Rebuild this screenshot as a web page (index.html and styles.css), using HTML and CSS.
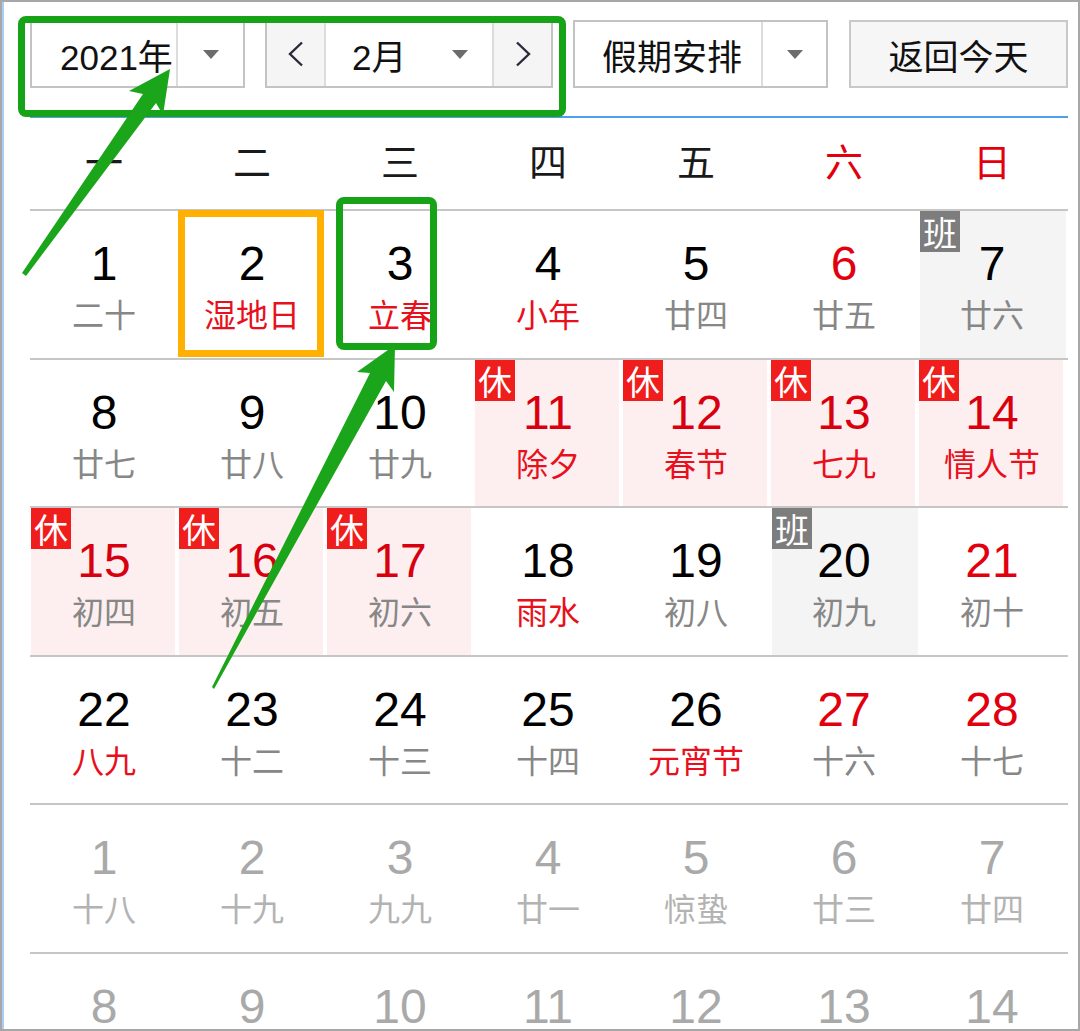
FILE: index.html
```html
<!DOCTYPE html>
<html lang="zh-CN">
<head>
<meta charset="utf-8">
<title>万年历</title>
<link rel="stylesheet" href="styles.css">
</head>
<body>
<div class="frame">
  <div class="toolbar">
    <div class="select year">
      <span class="seg seg-text">2021年</span>
      <span class="seg seg-arrow"><i class="tri"></i></span>
    </div>
    <div class="select month">
      <span class="seg seg-nav prev"><svg width="18" height="26" viewBox="0 0 18 26"><polyline points="15,1.5 3,13 15,24.5" fill="none" stroke="#2a2a3a" stroke-width="2.4"/></svg></span>
      <span class="seg seg-month">2月<i class="tri"></i></span>
      <span class="seg seg-nav next"><svg width="18" height="26" viewBox="0 0 18 26"><polyline points="3,1.5 15,13 3,24.5" fill="none" stroke="#2a2a3a" stroke-width="2.4"/></svg></span>
    </div>
    <div class="select holiday">
      <span class="seg seg-text">假期安排</span>
      <span class="seg seg-arrow"><i class="tri"></i></span>
    </div>
    <button class="today-btn">返回今天</button>
  </div>
  <div class="blue-rule"></div>
  <div class="weekdays">
    <span>一</span><span>二</span><span>三</span><span>四</span><span>五</span><span class="red">六</span><span class="red">日</span>
  </div>

  <div class="row">
    <div class="cell"><div class="num">1</div><div class="lunar">二十</div></div>
    <div class="cell today"><div class="num">2</div><div class="lunar fest">湿地日</div></div>
    <div class="cell"><div class="num">3</div><div class="lunar fest">立春</div></div>
    <div class="cell"><div class="num">4</div><div class="lunar fest">小年</div></div>
    <div class="cell"><div class="num">5</div><div class="lunar">廿四</div></div>
    <div class="cell wkend"><div class="num">6</div><div class="lunar">廿五</div></div>
    <div class="cell work"><span class="badge badge-work">班</span><div class="num">7</div><div class="lunar">廿六</div></div>
  </div>

  <div class="row">
    <div class="cell"><div class="num">8</div><div class="lunar">廿七</div></div>
    <div class="cell"><div class="num">9</div><div class="lunar">廿八</div></div>
    <div class="cell"><div class="num">10</div><div class="lunar">廿九</div></div>
    <div class="cell rest"><span class="badge">休</span><div class="num">11</div><div class="lunar fest">除夕</div></div>
    <div class="cell rest"><span class="badge">休</span><div class="num">12</div><div class="lunar fest">春节</div></div>
    <div class="cell rest"><span class="badge">休</span><div class="num">13</div><div class="lunar fest">七九</div></div>
    <div class="cell rest"><span class="badge">休</span><div class="num">14</div><div class="lunar fest">情人节</div></div>
  </div>

  <div class="row">
    <div class="cell rest"><span class="badge">休</span><div class="num">15</div><div class="lunar">初四</div></div>
    <div class="cell rest"><span class="badge">休</span><div class="num">16</div><div class="lunar">初五</div></div>
    <div class="cell rest"><span class="badge">休</span><div class="num">17</div><div class="lunar">初六</div></div>
    <div class="cell"><div class="num">18</div><div class="lunar fest">雨水</div></div>
    <div class="cell"><div class="num">19</div><div class="lunar">初八</div></div>
    <div class="cell work"><span class="badge badge-work">班</span><div class="num">20</div><div class="lunar">初九</div></div>
    <div class="cell wkend"><div class="num">21</div><div class="lunar">初十</div></div>
  </div>

  <div class="row">
    <div class="cell"><div class="num">22</div><div class="lunar fest">八九</div></div>
    <div class="cell"><div class="num">23</div><div class="lunar">十二</div></div>
    <div class="cell"><div class="num">24</div><div class="lunar">十三</div></div>
    <div class="cell"><div class="num">25</div><div class="lunar">十四</div></div>
    <div class="cell"><div class="num">26</div><div class="lunar fest">元宵节</div></div>
    <div class="cell wkend"><div class="num">27</div><div class="lunar">十六</div></div>
    <div class="cell wkend"><div class="num">28</div><div class="lunar">十七</div></div>
  </div>

  <div class="row">
    <div class="cell other"><div class="num">1</div><div class="lunar">十八</div></div>
    <div class="cell other"><div class="num">2</div><div class="lunar">十九</div></div>
    <div class="cell other"><div class="num">3</div><div class="lunar">九九</div></div>
    <div class="cell other"><div class="num">4</div><div class="lunar">廿一</div></div>
    <div class="cell other"><div class="num">5</div><div class="lunar">惊蛰</div></div>
    <div class="cell other"><div class="num">6</div><div class="lunar">廿三</div></div>
    <div class="cell other"><div class="num">7</div><div class="lunar">廿四</div></div>
  </div>

  <div class="row">
    <div class="cell other"><div class="num">8</div><div class="lunar">廿五</div></div>
    <div class="cell other"><div class="num">9</div><div class="lunar">廿六</div></div>
    <div class="cell other"><div class="num">10</div><div class="lunar">廿七</div></div>
    <div class="cell other"><div class="num">11</div><div class="lunar">廿八</div></div>
    <div class="cell other"><div class="num">12</div><div class="lunar">廿九</div></div>
    <div class="cell other"><div class="num">13</div><div class="lunar">二月</div></div>
    <div class="cell other"><div class="num">14</div><div class="lunar">初二</div></div>
  </div>
</div>

<div class="annot annot-toolbar"></div>
<div class="annot annot-day"></div>
<svg class="arrows" width="1080" height="1031" viewBox="0 0 1080 1031">
  <polygon points="170,69 163,115 156,103 26,276 22,273 143,94 129,91" fill="#1aa51a"/>
  <polygon points="395,345 394,392 386,381 214,689 212,687 370,373 357,372" fill="#1aa51a"/>
</svg>
</body>
</html>
```

FILE: styles.css
```css
* {
  box-sizing: border-box;
}

html,
body {
  margin: 0;
  padding: 0;
}

body {
  position: relative;
  width: 1080px;
  height: 1031px;
  overflow: hidden;
  background: #fff;
  font-family: "Liberation Sans", "Noto Sans CJK SC", sans-serif;
  color: #111;
}

.frame {
  width: 1080px;
  height: 1031px;
  border: 2px solid #a7a7a7;
  box-shadow: inset 2px 0 0 #a8cff3;
  padding-left: 28px;
  overflow: hidden;
}

/* ---------- toolbar ---------- */
.toolbar {
  display: flex;
  gap: 20px;
  height: 68px;
  margin-top: 18px;
}

.select {
  display: flex;
  height: 68px;
  border: 2px solid #c3c3c3;
  background: #fff;
}

.seg {
  display: flex;
  align-items: center;
  height: 100%;
  font-size: 35px;
  color: #111;
}

.seg-text {
  border-right: 2px solid #dcdcdc;
}

.seg-arrow {
  justify-content: center;
}

.tri {
  display: block;
  width: 0;
  height: 0;
  border-left: 8px solid transparent;
  border-right: 8px solid transparent;
  border-top: 9px solid #6c6c6c;
}

.year {
  width: 215px;
}

.year .seg-text {
  width: 146px;
  padding-left: 28px;
}

.year .seg-arrow {
  width: 65px;
}

.month {
  width: 288px;
}

.seg-nav {
  justify-content: center;
  background: #f5f5f5;
}

.seg-nav svg {
  display: block;
}

.prev {
  width: 59px;
  border-right: 2px solid #dcdcdc;
}

.next {
  width: 57px;
}

.seg-month {
  width: 168px;
  justify-content: space-between;
  padding: 0 24px 0 26px;
  border-right: 2px solid #dcdcdc;
}

.holiday {
  width: 255px;
}

.holiday .seg-text {
  width: 188px;
  padding-left: 27px;
  font-family: "Noto Sans CJK SC", sans-serif;
}

.holiday .seg-arrow {
  width: 63px;
}

.today-btn {
  width: 219px;
  height: 68px;
  margin-left: 1px;
  padding: 0;
  border: 2px solid #c8c8c8;
  background: #f6f6f6;
  font-family: "Noto Sans CJK SC", sans-serif;
  font-size: 35px;
  color: #111;
}

.blue-rule {
  width: 1038px;
  height: 2px;
  margin-top: 28px;
  background: #4f9ff0;
}

/* ---------- weekday header ---------- */
.weekdays {
  display: grid;
  grid-template-columns: repeat(7, 148px);
  height: 91px;
  padding-top: 20px;
  font-family: "Noto Sans CJK SC", sans-serif;
  font-size: 38px;
  line-height: 44px;
  text-align: center;
  color: #1a1a1a;
}

.weekdays .red {
  color: #e2000f;
}

/* ---------- day grid ---------- */
.row {
  display: grid;
  grid-template-columns: repeat(7, 148px);
  width: 1038px;
  height: 148.5px;
  border-top: 2px solid #c6c6c6;
}

.cell {
  position: relative;
  padding-top: 28px;
  text-align: center;
}

.num {
  font-family: "Liberation Sans", sans-serif;
  font-size: 48px;
  line-height: 50px;
  color: #000;
}

.lunar {
  margin-top: 6px;
  font-family: "Noto Sans CJK SC", sans-serif;
  font-size: 32px;
  line-height: 36px;
  color: #878787;
  white-space: nowrap;
}

.lunar.fest {
  color: #e8101c;
}

.wkend .num {
  color: #e2000f;
}

.rest {
  background: linear-gradient(#fdefef, #fdefef) no-repeat 1px 0 / calc(100% - 4px) 100%;
}

.rest .num {
  color: #d8000e;
}

.work {
  background: linear-gradient(#f4f4f4, #f4f4f4) no-repeat 2px 0 / calc(100% - 2px) 100%;
}

.other .num {
  color: #a9a9a9;
}

.other .lunar {
  color: #b3b3b3;
}

.badge {
  position: absolute;
  top: 0;
  left: 1px;
  width: 40px;
  height: 41px;
  background: #f01d1d;
  color: #fff;
  font-family: "Noto Sans CJK SC", sans-serif;
  font-size: 34px;
  line-height: 41px;
  text-align: center;
}

.badge-work {
  left: 2px;
  background: #7d7d7d;
}

.today::after {
  content: "";
  position: absolute;
  top: -1px;
  left: 0;
  right: 2px;
  bottom: 1px;
  border: 7px solid #ffb000;
}

/* ---------- annotations ---------- */
.annot {
  position: absolute;
  border: 7px solid #17a317;
  border-radius: 8px;
  pointer-events: none;
}

.annot-toolbar {
  left: 18px;
  top: 16px;
  width: 548px;
  height: 101px;
}

.annot-day {
  left: 336px;
  top: 197px;
  width: 101px;
  height: 153px;
}

.arrows {
  position: absolute;
  left: 0;
  top: 0;
  pointer-events: none;
}
```
